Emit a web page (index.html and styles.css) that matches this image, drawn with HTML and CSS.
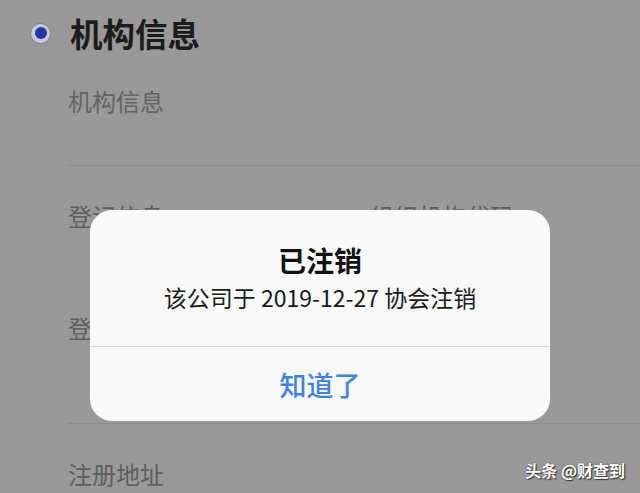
FILE: index.html
```html
<!DOCTYPE html>
<html lang="zh">
<head>
<meta charset="utf-8">
<link rel="stylesheet" href="styles.css">
</head>
<body>
<div class="page">
  <div class="header">
    <span class="radio"><span class="radio-dot"></span></span>
    <h1 class="heading">机构信息</h1>
  </div>
  <div class="section">
    <div class="subtitle">机构信息</div>
    <div class="group">
      <div class="field">
        <span class="field-label">登记信息</span>
        <span class="field-label">组织机构代码</span>
      </div>
      <div class="field">
        <span class="field-label">登记信息</span>
      </div>
    </div>
    <div class="group last">
      <div class="field">
        <span class="field-label">注册地址</span>
      </div>
    </div>
  </div>

  <div class="dialog">
    <div class="dialog-body">
      <div class="dialog-title">已注销</div>
      <div class="dialog-msg">该公司于 2019-12-27 协会注销</div>
    </div>
    <div class="dialog-btn">知道了</div>
  </div>

  <div class="watermark">头条 @财查到</div>
</div>
</body>
</html>
```
FILE: styles.css
```css
html, body {
  margin: 0;
  padding: 0;
  background: #999999;
}
body {
  font-family: "Noto Sans CJK SC", "Noto Sans", sans-serif;
  width: 640px;
  height: 493px;
  overflow: hidden;
}
.page {
  position: relative;
  width: 640px;
  height: 493px;
}
.header {
  display: flex;
  align-items: center;
  height: 66px;
  padding-left: 30px;
  gap: 19px;
}
.radio {
  box-sizing: border-box;
  width: 21px;
  height: 21px;
  border-radius: 50%;
  border: 1.5px solid #7a7e8e;
  background: #c9cbdb;
  display: flex;
  align-items: center;
  justify-content: center;
}
.radio-dot {
  width: 12px;
  height: 12px;
  border-radius: 50%;
  background: #2538ae;
}
.heading {
  margin: 0;
  font-size: 32.5px;
  line-height: 32px;
  font-weight: 700;
  color: #1c1c1c;
}
.section {
  padding-left: 68px;
}
.subtitle {
  padding-top: 23px;
  padding-bottom: 52px;
  font-size: 24px;
  line-height: 24px;
  color: #636363;
}
.group {
  border-top: 1px solid #8d8d8d;
  padding: 38px 0 83px;
  display: flex;
  flex-direction: column;
  gap: 88px;
}
.group.last {
  padding-bottom: 0;
}
.field {
  display: flex;
  height: 24px;
}
.field-label {
  flex-shrink: 0;
  font-size: 24px;
  line-height: 24px;
  color: #5e5e5e;
}
.field-label:first-child {
  width: 302px;
}
.dialog {
  position: absolute;
  left: 90px;
  top: 210px;
  width: 460px;
  height: 211px;
  border-radius: 22px;
  background: #f9f9f9;
  display: flex;
  flex-direction: column;
  overflow: hidden;
}
.dialog-body {
  padding-top: 34px;
  height: 102px;
  border-bottom: 1px solid #d9d9d9;
  text-align: center;
}
.dialog-title {
  font-size: 28px;
  line-height: 32px;
  font-weight: 700;
  color: #111111;
}
.dialog-msg {
  margin-top: 8px;
  font-size: 23px;
  line-height: 26px;
  color: #1a1a1a;
}
.dialog-btn {
  flex: 1;
  display: flex;
  align-items: center;
  justify-content: center;
  font-size: 27px;
  font-weight: 500;
  color: #3d82ea;
}
.watermark {
  position: absolute;
  right: 15px;
  bottom: 13px;
  font-size: 16px;
  line-height: 20px;
  font-weight: 700;
  color: #ffffff;
  text-shadow: 1px 1px 1px #333333, 0 0 2px #555555;
}
```
